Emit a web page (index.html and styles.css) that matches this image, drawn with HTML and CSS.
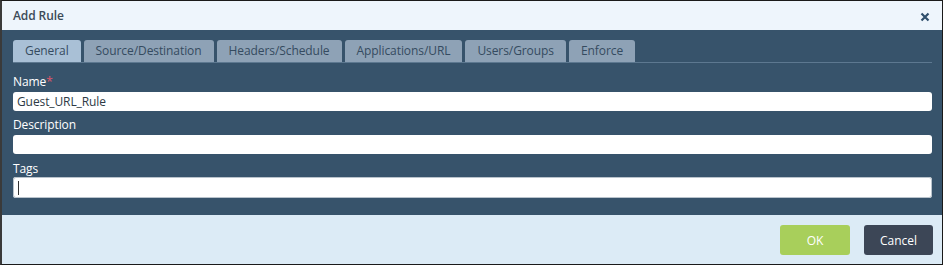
FILE: index.html
```html
<!DOCTYPE html>
<html>
<head>
<meta charset="utf-8">
<link rel="stylesheet" href="styles.css">
</head>
<body>
<div class="dialog">
  <div class="header">
    <span class="title">Add Rule</span>
    <span class="close">
      <svg width="10" height="10" viewBox="0 0 10 10"><path d="M1.5 1.5 L8.5 8.5 M8.5 1.5 L1.5 8.5" stroke="#2f4f6c" stroke-width="2.2" stroke-linecap="butt"/></svg>
    </span>
  </div>
  <div class="body">
    <div class="tabs">
      <div class="tab active">General</div>
      <div class="tab">Source/Destination</div>
      <div class="tab">Headers/Schedule</div>
      <div class="tab">Applications/URL</div>
      <div class="tab">Users/Groups</div>
      <div class="tab">Enforce</div>
    </div>
    <div class="field first">
      <label class="label">Name<span class="req">*</span></label>
      <div class="input">Guest_URL_Rule</div>
    </div>
    <div class="field">
      <label class="label">Description</label>
      <div class="input"></div>
    </div>
    <div class="field last">
      <label class="label">Tags</label>
      <div class="input tall"><span class="caret"></span></div>
    </div>
  </div>
  <div class="footer">
    <button class="btn ok">OK</button>
    <button class="btn cancel">Cancel</button>
  </div>
</div>
</body>
</html>
```
FILE: styles.css
```css
html, body {
  margin: 0;
  padding: 0;
  background: #ffffff;
}
body {
  font-family: "Open Sans", "Noto Sans", sans-serif;
  font-size: 12px;
}
.dialog {
  width: 943px;
  height: 265px;
  box-sizing: border-box;
  border: 1px solid #1a1a1a;
  border-left: 2px solid #3a3a3a;
  display: flex;
  flex-direction: column;
  background: #dcebf6;
}
.header {
  height: 29px;
  flex: none;
  background: #eef5fc;
  display: flex;
  align-items: center;
  justify-content: space-between;
  padding: 0 12px 0 11px;
}
.title {
  color: #3c4a57;
  font-size: 12px;
  font-weight: 600;
  letter-spacing: -0.1px;
}
.close {
  display: flex;
  align-items: center;
  margin-top: 3px;
}
.body {
  flex: none;
  background: #37536b;
  padding: 10px 10px 17px 11px;
  display: flex;
  flex-direction: column;
}
.tabs {
  display: flex;
  gap: 3px;
  border-bottom: 1px solid #5d7890;
}
.tab {
  height: 22px;
  line-height: 22px;
  background: #8ea2b6;
  color: #354b60;
  border-radius: 3px 3px 0 0;
  padding: 0 12px;
  font-size: 12px;
  letter-spacing: -0.08px;
}
.tab.active {
  background: #a9c0d6;
}
.field {
  display: flex;
  flex-direction: column;
}
.label {
  color: #ffffff;
  font-size: 12px;
  line-height: 16px;
  margin-top: 6px;
  margin-bottom: 2px;
  letter-spacing: -0.1px;
}
.field.first .label { margin-top: 11px; }
.field.last .label { margin-top: 7px; margin-bottom: 0; }
.req { color: #e0556a; }
.input {
  background: #ffffff;
  height: 19px;
  line-height: 19px;
  border-radius: 3px;
  padding: 0 4px;
  color: #2d3a45;
  font-size: 12px;
  letter-spacing: -0.1px;
}
.input.tall {
  height: 21px;
  box-shadow: inset 0 0 0 1px #b9c3cc;
  display: flex;
  align-items: center;
}
.caret {
  width: 1px;
  height: 14px;
  background: #333;
  margin-left: 1px;
}
.footer {
  flex: 1;
  display: flex;
  justify-content: flex-end;
  align-items: flex-start;
  padding: 10px 9px 0 0;
  gap: 14px;
}
.btn {
  font-family: "Open Sans", "Noto Sans", sans-serif;
  font-size: 12px;
  height: 30px;
  border: none;
  border-radius: 3px;
  color: #ffffff;
  padding: 0;
}
.ok {
  width: 70px;
  background: #a8cf5b;
}
.cancel {
  width: 69px;
  background: #3c4656;
}
```
